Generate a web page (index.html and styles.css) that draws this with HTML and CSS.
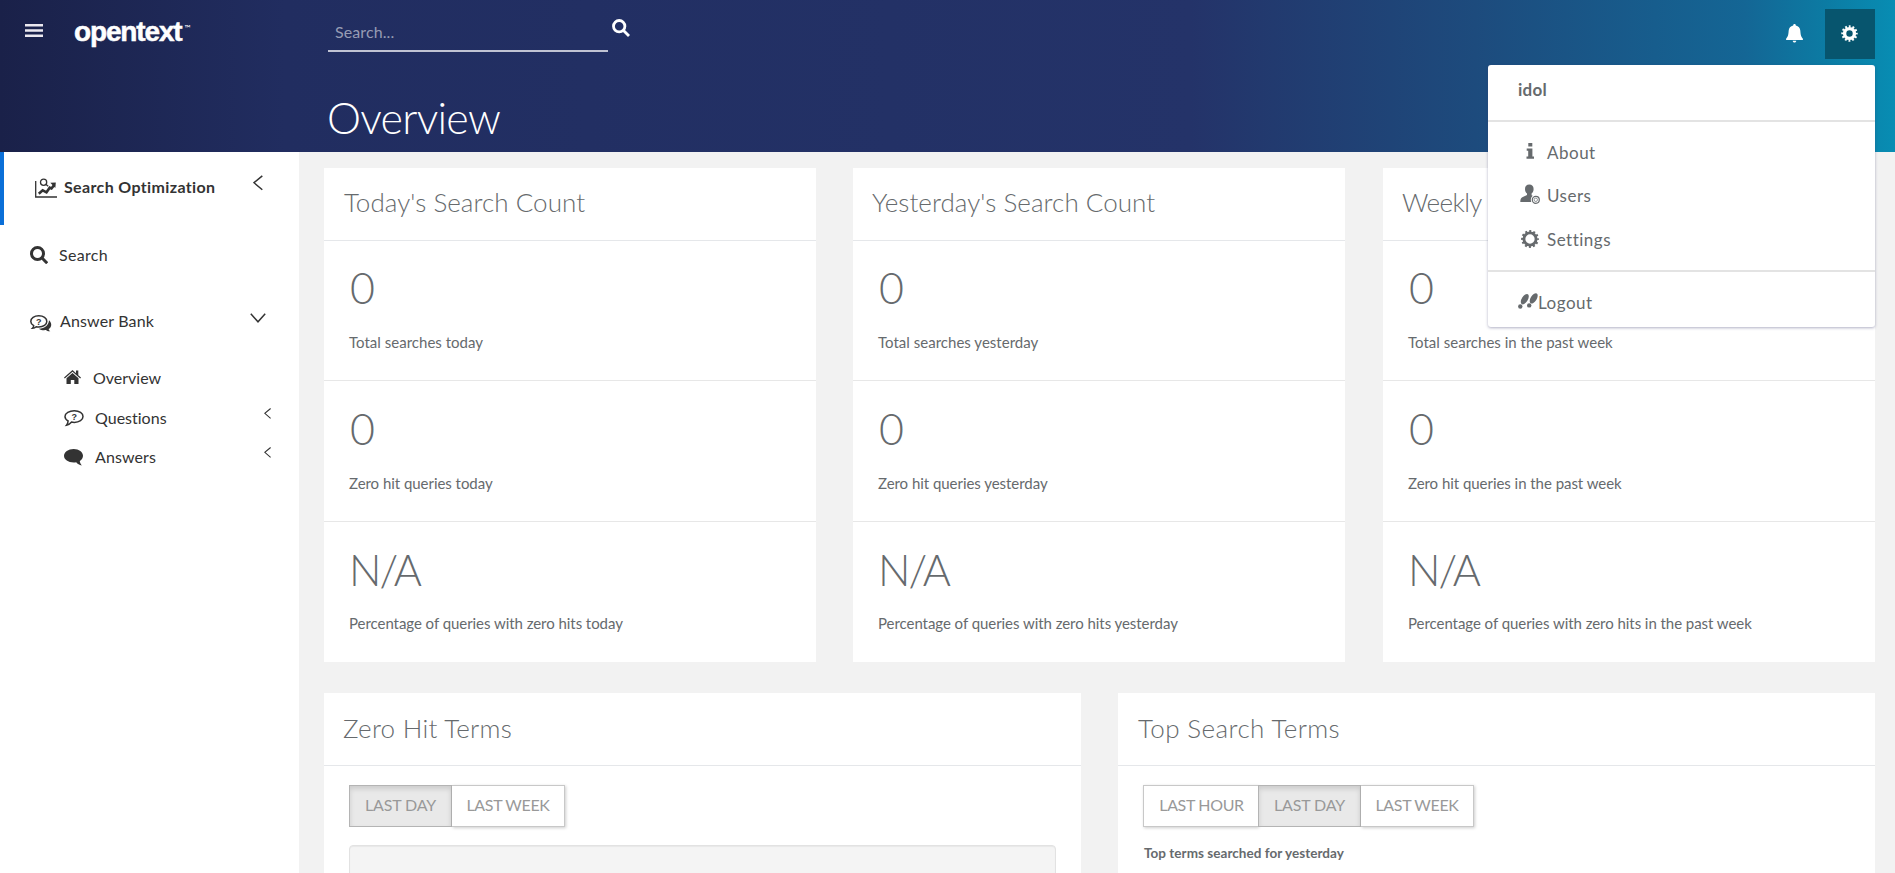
FILE: index.html
```html
<!DOCTYPE html>
<html lang="en">
<head>
<meta charset="utf-8">
<title>Overview</title>
<link rel="stylesheet" href="styles.css">
</head>
<body>
<header class="topbar">
  <svg class="burger" viewBox="0 0 18 13"><path d="M0 1.3h18M0 6.5h18M0 11.7h18"/></svg>
  <div class="logo"><span class="logo-name">opentext</span><span class="logo-tm">™</span></div>
  <div class="head-main">
    <div class="search-row">
      <div class="search-box">Search...</div>
      <svg class="search-go" viewBox="0 0 18 18"><circle cx="7.2" cy="7.2" r="5.7"/><path d="M11.5 11.5L17 17"/></svg>
    </div>
    <h1 class="page-title">Overview</h1>
  </div>
  <div class="head-actions">
    <svg class="bell" viewBox="0 0 17 19"><path d="M8.500 0c.9 0 1.300.6 1.300 1.400 2.700.5 4.300 2.500 4.500 5.200.3 4.600.9 6.600 2.600 8.100v1.200H.1v-1.200c1.700-1.500 2.300-3.500 2.600-8.100.2-2.700 1.800-4.700 4.500-5.200C7.200.6 7.600 0 8.500 0zM6.700 16.700h3.600c-.1 1.100-.9 1.800-1.800 1.800s-1.700-.7-1.800-1.800z"/></svg>
    <div class="gear-button">
      <svg class="gear" viewBox="-9 -9 18 18"><circle r="5.200" stroke-width="3.600"/><circle r="7.500" stroke-width="2.400" stroke-dasharray="1.960 1.967" stroke-dashoffset="0.98"/></svg>
    </div>
  </div>
</header>

<div class="body">
  <nav class="sidebar">
    <div class="nav-item nav-active">
      <svg class="ico-chart" viewBox="0 0 22 20"><path class="ln" d="M.7 3v16H22"/><path class="tk" d="M3.800 15.800l3.900-3.500 3.800 2 3.200-4.600 1.800.8 2.800-3.600"/><path class="fl" d="M15.300 4.800l5.500-.4-.5 5.600z"/><circle class="ln" cx="8.600" cy="4.200" r="3.100"/><path class="ln" d="M10.700 6.300l2.500 2"/></svg>
      <span class="label">Search Optimization</span>
      <svg class="chev chev-left" viewBox="0 0 10 16"><path d="M9.300.8L1 7.700l8.300 7"/></svg>
    </div>
    <div class="nav-item nav-search">
      <svg class="ico-search" viewBox="0 0 18 18"><circle cx="7.500" cy="7.500" r="6"/><path d="M12 12l5.200 5.200"/></svg>
      <span class="label">Search</span>
    </div>
    <div class="nav-item nav-bank">
      <svg class="ico-bank" viewBox="0 0 22 17"><path class="fl" d="M19 5.200c3.300 3 2.700 6.800-.3 8.700.1 1 .6 1.700 1.600 2.400-1.900.2-3.300-.2-4.400-1.200-2.600.4-5.200-.1-7-1.400C14.800 13.500 18.800 10 19 5.200z"/><path class="ol" d="M8.800.8c4.600 0 8 2.400 8 5.600s-3.400 5.600-8 5.600c-.9 0-1.800-.1-2.600-.3-1 .9-2.200 1.400-3.700 1.500.8-.8 1.200-1.600 1.200-2.500C1.900 9.600.8 8.100.8 6.400.8 3.200 4.200.8 8.800.8z"/><text x="8.700" y="9.800">?</text></svg>
      <span class="label">Answer Bank</span>
      <svg class="chev chev-down" viewBox="0 0 16 10"><path d="M.8.8l7.200 8 7.200-8"/></svg>
    </div>
    <div class="nav-item nav-sub nav-overview">
      <svg class="ico-home" viewBox="0 0 17 14"><path d="M8.500 0L12 3.200V.5h2.300v4.700L17 7.600l-.8.9-7.700-6.800L.8 8.500 0 7.600z"/><path d="M8.500 2.900l6 5.300V14h-4.200v-4H6.800v4H2.500V8.200z"/></svg>
      <span class="label">Overview</span>
    </div>
    <div class="nav-item nav-sub nav-questions">
      <svg class="ico-bubble" viewBox="0 0 20 17"><path class="ol" d="M10.300.8c5 0 8.700 2.500 8.700 5.800s-3.700 5.800-8.700 5.800c-1 0-1.900-.1-2.700-.3-1.400 1.700-3 2.800-5.100 3.100 1-1.200 1.500-2.700 1.600-4.200C2.200 9.900 1 8.500 1 6.600 1 3.300 5.300.8 10.300.8z"/><text x="10.200" y="10.400">?</text></svg>
      <span class="label">Questions</span>
      <svg class="chev chev-small" viewBox="0 0 7 11"><path d="M6.600.5L.8 5.300l5.800 5"/></svg>
    </div>
    <div class="nav-item nav-sub nav-answers">
      <svg class="ico-bubble" viewBox="0 0 20 17"><path class="fl" d="M9.700 0c5.300 0 9.300 3 9.300 6.800 0 2.200-1.200 4.100-3.200 5.300.1 1.500.8 2.900 2 4.400-2.500-.4-4.300-1.500-5.600-3.200-.8.2-1.600.2-2.500.2C4.300 13.500 0 10.600 0 6.800S4.300 0 9.700 0z"/></svg>
      <span class="label">Answers</span>
      <svg class="chev chev-small" viewBox="0 0 7 11"><path d="M6.600.5L.8 5.300l5.800 5"/></svg>
    </div>
  </nav>

  <main class="content">
    <div class="row row-three">
      <section class="card">
        <h2 class="card-title">Today's Search Count</h2>
        <div class="stat"><div class="num">0</div><div class="cap">Total searches today</div></div>
        <div class="stat"><div class="num">0</div><div class="cap">Zero hit queries today</div></div>
        <div class="stat"><div class="num num-na">N/A</div><div class="cap">Percentage of queries with zero hits today</div></div>
      </section>
      <section class="card">
        <h2 class="card-title">Yesterday's Search Count</h2>
        <div class="stat"><div class="num">0</div><div class="cap">Total searches yesterday</div></div>
        <div class="stat"><div class="num">0</div><div class="cap">Zero hit queries yesterday</div></div>
        <div class="stat"><div class="num num-na">N/A</div><div class="cap">Percentage of queries with zero hits yesterday</div></div>
      </section>
      <section class="card">
        <h2 class="card-title title-tight">Weekly</h2>
        <div class="stat"><div class="num">0</div><div class="cap">Total searches in the past week</div></div>
        <div class="stat"><div class="num">0</div><div class="cap">Zero hit queries in the past week</div></div>
        <div class="stat"><div class="num num-na">N/A</div><div class="cap">Percentage of queries with zero hits in the past week</div></div>
      </section>
    </div>
    <div class="row row-two">
      <section class="card card-tall">
        <h2 class="card-title title-wide">Zero Hit Terms</h2>
        <div class="btn-group"><div class="btn btn-day on">LAST DAY</div><div class="btn btn-week">LAST WEEK</div></div>
        <div class="well"></div>
      </section>
      <section class="card card-tall">
        <h2 class="card-title title-wider">Top Search Terms</h2>
        <div class="btn-group"><div class="btn btn-hour">LAST HOUR</div><div class="btn btn-day on">LAST DAY</div><div class="btn btn-week">LAST WEEK</div></div>
        <p class="note">Top terms searched for yesterday</p>
      </section>
    </div>
  </main>
</div>

<div class="menu">
  <div class="menu-user">idol</div>
  <div class="menu-mid">
    <div class="menu-item"><svg class="ico-menu" viewBox="0 0 20 20"><path d="M8.300 2h4v3.500h-4zM6.700 7.500h5.700v8h1.600v2.300H6.500v-2.300h1.700V9.800H6.700z"/></svg><span>About</span></div>
    <div class="menu-item menu-users"><svg class="ico-menu" viewBox="0 0 20 20"><path d="M9.300.5c2.700 0 4.300 1.800 4.300 4.400 0 2-.8 3.600-2 4.600v1.700l2.300 1.200c-1.700 1.300-2.500 3.400-1.700 5.600H.3c0-3 .8-4.200 3-5.200l3.700-1.900V9.500C5.800 8.500 5 6.900 5 4.900 5 2.300 6.600.5 9.300.5z"/><circle class="halo" cx="15.800" cy="15.800" r="5"/><circle class="ring" cx="15.800" cy="15.800" r="3.500"/><circle class="ring-in" cx="15.800" cy="15.800" r="1.700"/></svg><span>Users</span></div>
    <div class="menu-item"><svg class="ico-menu ico-gear" viewBox="-10 -10 20 20"><circle r="6.100" stroke-width="2.900"/><circle r="7.900" stroke-width="2" stroke-dasharray="2.060 2.076" stroke-dashoffset="1.030"/></svg><span>Settings</span></div>
  </div>
  <div class="menu-item menu-logout"><svg class="ico-feet" viewBox="0 0 20 17"><ellipse cx="6.800" cy="6.200" rx="3" ry="5.800" transform="rotate(32 6.800 6.200)"/><circle cx="2.300" cy="13.500" r="2.200"/><ellipse cx="15.700" cy="5.400" rx="3" ry="5.800" transform="rotate(32 15.700 5.400)"/><circle cx="11.200" cy="12.400" r="2.200"/></svg><span>Logout</span></div>
</div>
</body>
</html>
```
FILE: styles.css
```css
* { box-sizing: border-box; }
body {
  margin: 0;
  width: 1895px;
  height: 873px;
  overflow: hidden;
  background: #f2f2f2;
  color: #666a6d;
  font-family: Lato, "Liberation Sans", sans-serif;
  font-size: 16px;
}
svg { display: block; flex: none; fill: none; }
h1, h2, p { margin: 0; font-weight: 300; }

.topbar {
  display: flex;
  height: 152px;
  color: #fff;
  background: linear-gradient(90deg, #1a2149 0, #212d60 285px, #243369 1190px, #1d4b7d 1475px, #146695 1745px, #0c7ba3 1825px, #088db3 1895px);
}
.burger { width: 18px; height: 13px; margin: 24px 0 0 25px; stroke: #ece9f0; stroke-width: 2.6; }
.logo { display: flex; width: 285px; padding: 16px 0 0 31px; }
.logo-name { font: bold 28px/32px "Liberation Sans", sans-serif; letter-spacing: -1.15px; -webkit-text-stroke: 0.5px #fff; }
.logo-tm { font-size: 8px; line-height: 10px; margin: 7px 0 0 3px; }
.head-main { width: 1400px; }
.search-row { display: flex; gap: 4px; }
.search-box {
  width: 280px;
  height: 52px;
  padding: 20px 0 0 7px;
  border-bottom: 2px solid #c0c3d3;
  line-height: 24px;
  letter-spacing: 0.1px;
  color: #979cb4;
}
.search-go { width: 18px; height: 18px; margin-top: 19px; stroke: #fff; stroke-width: 2.8; }
.page-title { font-size: 43px; line-height: 52px; letter-spacing: -0.72px; margin: 40px 0 0 -1px; }
.head-actions { display: flex; margin-left: 58px; }
.bell { width: 17px; height: 19px; margin: 24px 22px 0 0; fill: #fff; }
.gear-button { display: flex; align-items: center; justify-content: center; width: 50px; height: 50px; margin-top: 9px; background: #07556e; }
.gear { width: 17px; height: 17px; stroke: #fff; margin: -2px 2px 0 0; }

.body { display: flex; height: 721px; }
.sidebar { width: 299px; background: #fff; color: #333; }
.nav-item { display: flex; line-height: 24px; letter-spacing: 0; }
.chev { stroke: #333; stroke-width: 1.5; margin-left: auto; }
.chev-left { width: 10px; height: 16px; margin: 23px 36px 0 auto; }
.chev-down { width: 16px; height: 10px; margin: 0 33px 0 auto; }
.chev-small { width: 7px; height: 11px; margin: 2px 28px 0 auto; stroke-width: 1.1; }
.nav-active { height: 73px; border-left: 4px solid #0a6fd8; font-weight: 700; letter-spacing: 0.36px; }
.nav-active .label { margin: 23px 0 0 7px; }
.ico-chart { width: 22px; height: 20px; margin: 26px 0 0 31px; }
.ico-chart .ln { stroke: #333; stroke-width: 1.3; }
.ico-chart .tk { stroke: #333; stroke-width: 2.6; }
.fl { fill: #333; }
.ol { stroke: #333; stroke-width: 1.5; fill: #fff; }
.nav-item text { fill: #333; font: bold 9px "Liberation Sans", sans-serif; text-anchor: middle; letter-spacing: 0; }
.nav-search { margin-top: 18px; letter-spacing: 0.3px; }
.ico-search { width: 18px; height: 18px; margin: 3px 11px 0 30px; stroke: #333; stroke-width: 3; }
.nav-bank { margin-top: 42px; letter-spacing: 0.15px; }
.ico-bank { width: 22px; height: 17px; margin: 6px 8px 0 30px; }
.nav-bank .chev { margin-top: 4px; }
.nav-sub svg:first-child { margin-left: 64px; }
.nav-overview { margin-top: 33px; }
.ico-home { width: 17px; height: 14px; margin: 4px 12px 0 0; fill: #333; }
.nav-questions { margin-top: 16px; letter-spacing: 0.01px; }
.ico-bubble { width: 20px; height: 17px; margin: 4px 11px 0 0; }
.nav-answers { margin-top: 15px; letter-spacing: 0.1px; }

.content { flex: 1; padding: 16px 20px 0 25px; }
.row { display: flex; }
.row-three { justify-content: space-between; margin-bottom: 31px; }
.row-three .card { flex: none; width: 492px; }
.row-three .card:nth-child(2) { margin-right: 1px; }
.row-three .card + .card .card-title { padding-left: 19px; }
.row-two { gap: 37px; }
.card { flex: 1; height: 494px; background: #fff; }
.card-tall { height: 200px; }
.card-title { height: 73px; padding: 19px 0 0 20px; border-bottom: 1px solid #e5e7ea; font-size: 26px; line-height: 30px; letter-spacing: 0.04px; }
.title-tight { letter-spacing: -0.6px; }
.title-wide, .title-wider { padding: 20px 0 0 19px; letter-spacing: 0.26px; }
.title-wider { padding-left: 20px; letter-spacing: 0.41px; }
.stat { height: 140px; padding: 32px 0 0 25px; border-bottom: 1px solid #e7e7e7; }
.stat + .stat { height: 141px; padding-top: 33px; }
.stat:last-child { border-bottom: 0; }
.stat:last-child .cap { margin-top: 26px; letter-spacing: -0.05px; }
.num { font-size: 43px; line-height: 30px; font-weight: 300; margin-left: 1px; }
.num-na { letter-spacing: -2px; margin-left: 0; }
.cap { font-size: 15px; line-height: 24px; margin-top: 27px; letter-spacing: -0.04px; }
.stat:nth-child(2) .cap { letter-spacing: 0.02px; }
.btn-group { display: flex; margin: 19px 0 0 25px; }
.btn { height: 42px; border: 1px solid #c8c8c8; color: #999; font-size: 16px; line-height: 38px; letter-spacing: -0.35px; text-align: center; box-shadow: 1px 1px 3px rgba(0, 0, 0, .2); }
.btn + .btn { border-left: 0; }
.btn-day { width: 103px; letter-spacing: -0.17px; }
.btn-week { width: 113px; }
.btn-hour { width: 115px; padding-left: 1px; border-right: 0; }
.btn.on { background: #e9e9e9; border: 1px solid #b4b4b4; box-shadow: inset 0 3px 5px rgba(0, 0, 0, .125); }
.well { height: 60px; margin: 18px 25px 0; background: #f4f4f4; border: 1px solid #e2e2e2; border-radius: 4px; box-shadow: inset 0 1px 1px rgba(0, 0, 0, .05); }
.note { font-size: 13.5px; font-weight: 700; line-height: 20px; letter-spacing: 0.04px; margin: 16px 0 0 26px; }

.menu {
  position: absolute;
  left: 1488px;
  top: 65px;
  width: 387px;
  height: 262px;
  background: #fff;
  border-radius: 3px;
  box-shadow: 0 1px 3px rgba(60, 60, 110, .4);
  font-size: 17px;
  line-height: 24px;
  letter-spacing: 0.5px;
}
.menu-user { height: 57px; padding: 13px 0 0 30px; border-bottom: 2px solid #e3e3e3; font-weight: 700; letter-spacing: 0.26px; }
.menu-mid { height: 150px; padding-top: 19px; border-bottom: 2px solid #e3e3e3; }
.menu-item { display: flex; height: 43px; padding-left: 32px; }
.menu-users { height: 44px; }
.ico-menu { width: 20px; height: 20px; margin: 0 7px 0 0; fill: #666a6d; }
.ico-gear { fill: none; stroke: #666a6d; margin-top: 1px; }
.ring, .ring-in { fill: none; stroke: #666a6d; stroke-width: 1.2; }
.ring-in { stroke-width: 0.7; }
.halo { fill: #fff; }
.menu-logout { padding: 19px 0 0 30px; }
.ico-feet { width: 20px; height: 17px; fill: #666a6d; margin-top: 2px; }
```
